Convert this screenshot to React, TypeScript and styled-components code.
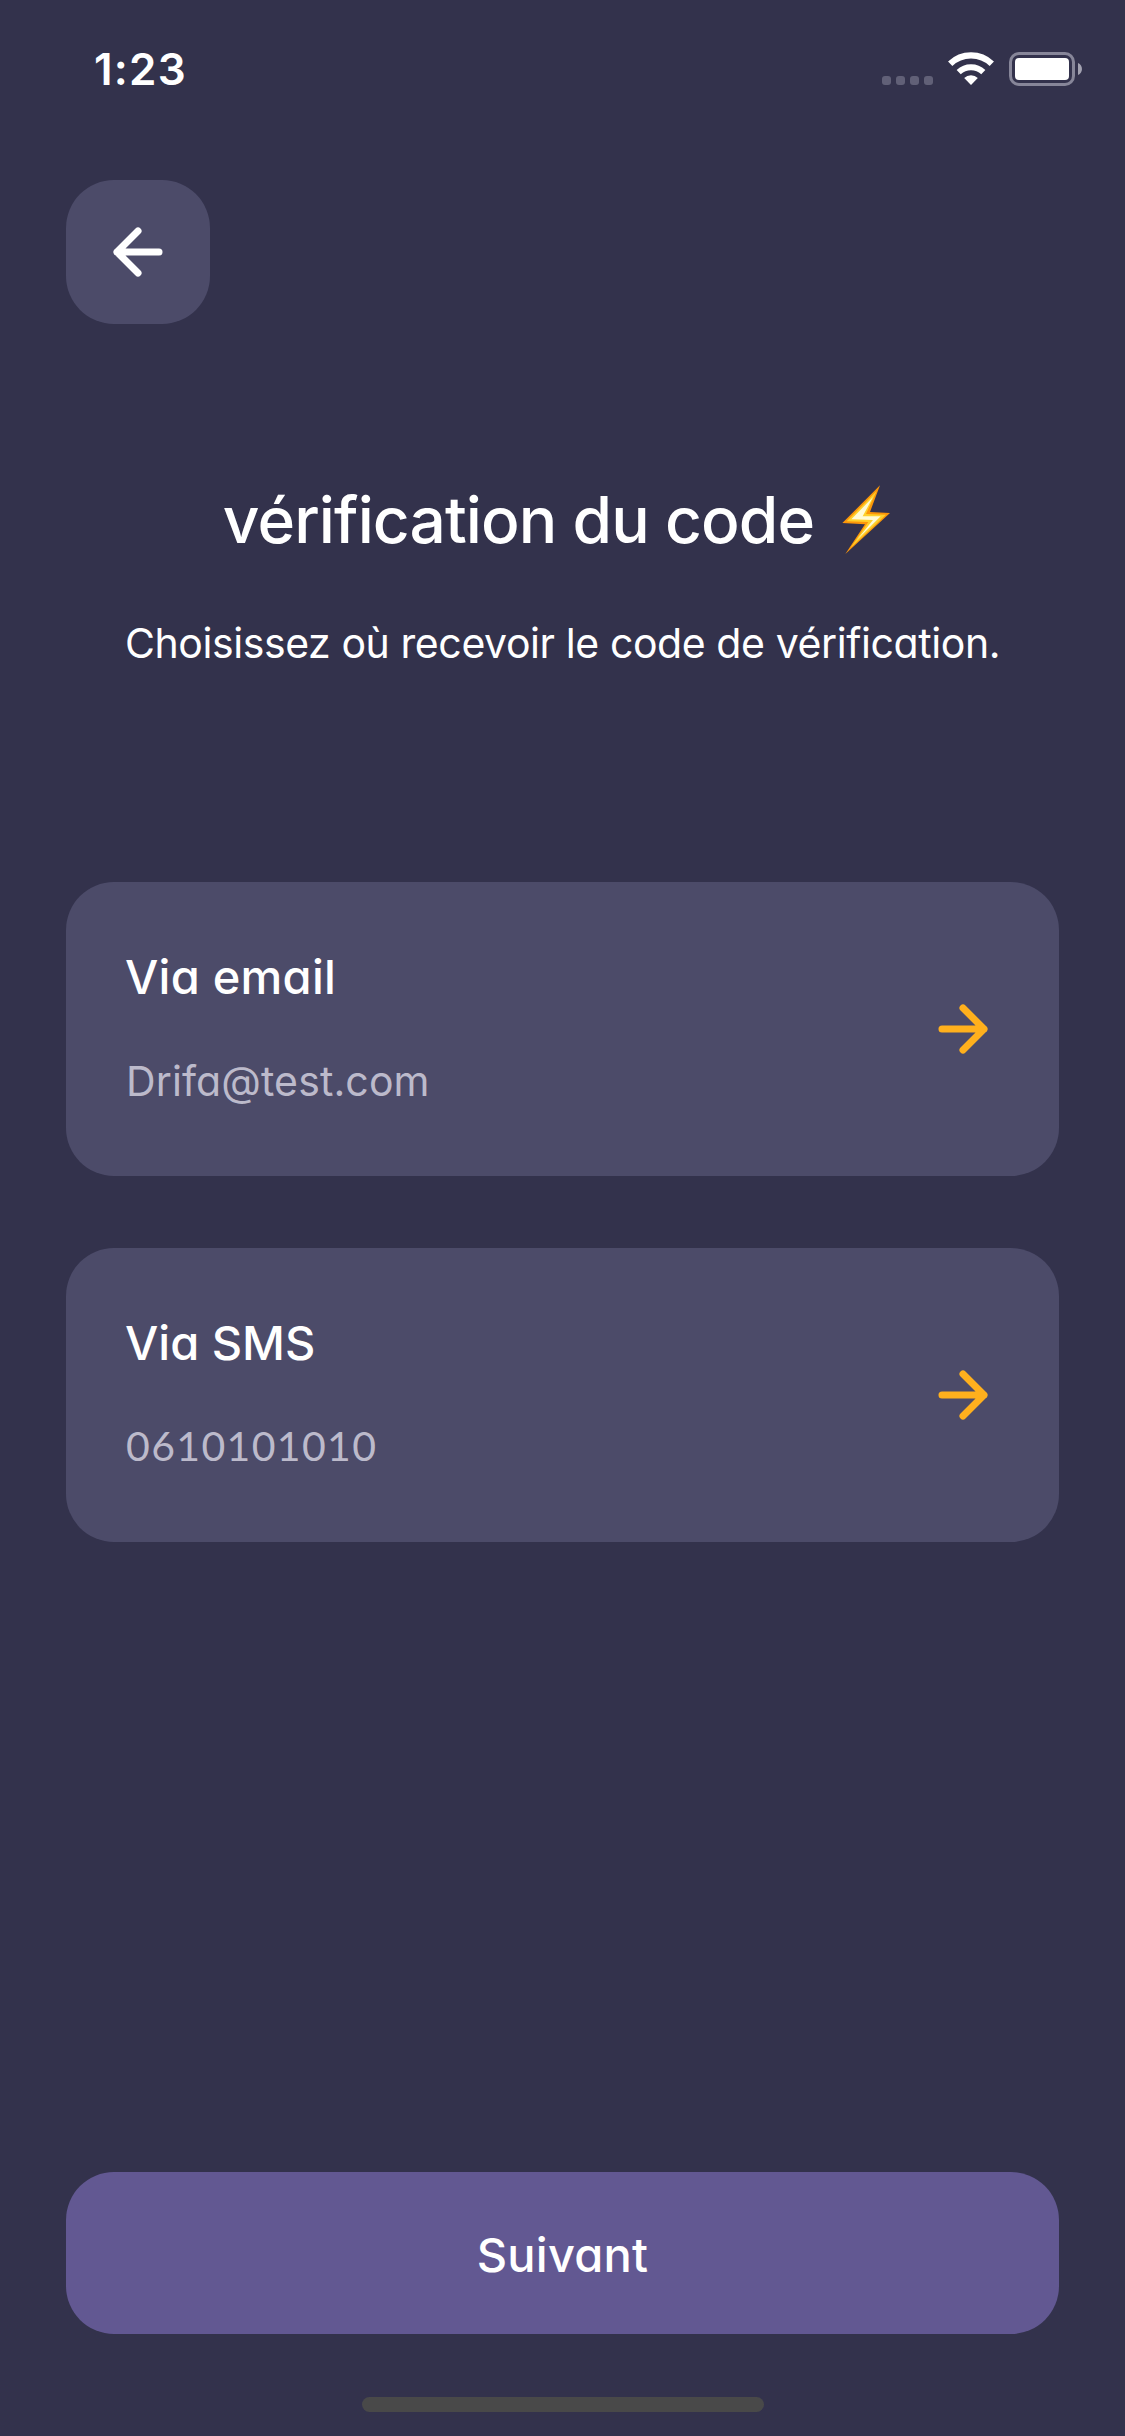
import React from "react";
import styled, { createGlobalStyle } from "styled-components";

const GlobalStyle = createGlobalStyle`
  *, *::before, *::after { box-sizing: border-box; }
  body { margin: 0; background: #33324c; }
  button { font: inherit; color: inherit; border: 0; padding: 0; cursor: pointer; }
`;

const Screen = styled.div`
  display: flex;
  flex-direction: column;
  width: 1125px;
  height: 2436px;
  overflow: hidden;
  background: #33324c;
  color: #fff;
  font-family: Inter, "Open Sans", sans-serif;
`;

const StatusBar = styled.header`
  display: flex;
  justify-content: space-between;
  height: 132px;
  padding: 42px 43px 0 94px;
`;

const Clock = styled.time`
  font-size: 44px;
  line-height: 54px;
  font-weight: 600;
  letter-spacing: 1.2px;
`;

const StatusIcons = styled.div`
  display: flex;
  align-items: flex-end;
  height: 44px;
  svg { display: block; }
`;

const SignalDots = styled.div`
  display: flex;
  gap: 5px;
  margin: 0 15px 1px 0;
`;

const Dot = styled.span`
  width: 9px;
  height: 9px;
  border-radius: 3px;
  background: #616077;
`;

const Content = styled.main`
  display: flex;
  flex-direction: column;
  flex: 1;
  padding: 48px 66px 0;
`;

const BackButton = styled.button`
  display: grid;
  place-items: center;
  width: 144px;
  height: 144px;
  border-radius: 48px;
  background: #4c4b69;
`;

const Heading = styled.div`
  display: flex;
  flex-direction: column;
  align-items: center;
  margin-top: 156px;
`;

const Title = styled.h1`
  display: flex;
  align-items: center;
  gap: 28px;
  height: 80px;
  margin: 0;
  padding-right: 11px;
  font-size: 64px;
  line-height: 80px;
  font-weight: 500;
  letter-spacing: -0.9px;
  white-space: nowrap;
  svg { display: block; margin-bottom: 1px; }
`;

const Subtitle = styled.p`
  margin: 53px 0 0;
  height: 60px;
  font-size: 41px;
  line-height: 60px;
  letter-spacing: -0.41px;
  font-feature-settings: "cv11";
  white-space: nowrap;
`;

const Options = styled.div`
  display: flex;
  flex-direction: column;
  gap: 72px;
  margin-top: 209px;
`;

const OptionCard = styled.button`
  display: flex;
  align-items: center;
  justify-content: space-between;
  height: 294px;
  padding: 0 60px;
  border-radius: 48px;
  background: #4c4b69;
  text-align: left;
  svg { display: block; }
`;

const OptionText = styled.span`
  display: flex;
  flex-direction: column;
  gap: 44px;
  font-feature-settings: "cv11";
`;

const OptionLabel = styled.span<{ $spacing: number }>`
  margin-left: -1px;
  font-size: 47px;
  line-height: 60px;
  font-weight: 500;
  letter-spacing: ${(p) => p.$spacing}px;
`;

const OptionValue = styled.span<{ $numeric: boolean }>`
  height: 60px;
  font-family: ${(p) => (p.$numeric ? 'Lato, Inter, sans-serif' : "inherit")};
  font-size: 41px;
  line-height: ${(p) => (p.$numeric ? 58 : 60)}px;
  color: #bcbacb;
  letter-spacing: ${(p) => (p.$numeric ? 1.35 : 0.12)}px;
`;

const NextButton = styled.button`
  height: 162px;
  margin-top: auto;
  border-radius: 48px;
  background: #625892;
  && {
    padding-top: 2px;
    font-size: 47px;
    font-weight: 500;
    letter-spacing: 0.25px;
  }
  font-feature-settings: "cv11";
`;

const HomeArea = styled.footer`
  display: flex;
  justify-content: center;
  height: 102px;
  padding-top: 63px;
`;

const HomeIndicator = styled.div`
  width: 402px;
  height: 15px;
  border-radius: 8px;
  background: #494949;
`;

const Arrow = ({ direction, color }: { direction: "left" | "right"; color: string }) => (
  <svg width="72" height="72" viewBox="0 0 24 24" fill="none" stroke={color} strokeWidth="2.35" strokeLinecap="round" strokeLinejoin="round">
    {direction === "left" ? <path d="M19 12H5M12 19l-7-7 7-7" /> : <path d="M5 12h14M12 5l7 7-7 7" />}
  </svg>
);

const WifiIcon = styled.svg`
  margin-right: 15px;
`;

const Wifi = () => (
  <WifiIcon width="46" height="34" viewBox="0 0 46 34" fill="none" stroke="#fff">
    <path d="M2.2 11.8A30 30 0 0 1 43.8 11.8" strokeWidth="6.2" />
    <path d="M10.7 20.1A18 18 0 0 1 35.3 20.1" strokeWidth="6" />
    <path d="M16.2 26.1A9.6 9.6 0 0 1 29.8 26.1L23 33Z" fill="#fff" stroke="none" />
  </WifiIcon>
);

const Battery = () => (
  <svg width="73" height="34" viewBox="0 0 73 34">
    <rect x="1.5" y="1.5" width="63" height="31" rx="8.5" fill="none" stroke="#878699" strokeWidth="3" />
    <rect x="6" y="6" width="54" height="22" rx="4" fill="#fff" />
    <path d="M69 11C74.3 13 74.3 21 69 23Z" fill="#a3a2b1" />
  </svg>
);

const Bolt = () => (
  <svg width="49" height="70" viewBox="728 74 147 210">
    <path d="M842 75L729 188L797 192L738 281L872 158L812 155Z" fill="#fb9609" />
    <path d="M832 92L742 183L807 185L754 262L860 163L800 161Z" fill="#ffd02a" />
    <path d="M821 110L756 177L821 179L772 240L844 168L790 168Z" fill="#fffbd5" />
  </svg>
);

const options = [
  { label: "Via email", value: "Drifa@test.com", labelSpacing: 0.25, numeric: false },
  { label: "Via SMS", value: "0610101010", labelSpacing: 0, numeric: true },
];

export default function App() {
  return (
    <Screen>
      <GlobalStyle />
      <StatusBar>
        <Clock>1:23</Clock>
        <StatusIcons>
          <SignalDots>
            <Dot />
            <Dot />
            <Dot />
            <Dot />
          </SignalDots>
          <Wifi />
          <Battery />
        </StatusIcons>
      </StatusBar>
      <Content>
        <BackButton aria-label="Retour">
          <Arrow direction="left" color="#fff" />
        </BackButton>
        <Heading>
          <Title>
            vérification du code
            <Bolt />
          </Title>
          <Subtitle>Choisissez où recevoir le code de vérification.</Subtitle>
        </Heading>
        <Options>
          {options.map((o) => (
            <OptionCard key={o.label}>
              <OptionText>
                <OptionLabel $spacing={o.labelSpacing}>{o.label}</OptionLabel>
                <OptionValue $numeric={o.numeric}>{o.value}</OptionValue>
              </OptionText>
              <Arrow direction="right" color="#ffb01d" />
            </OptionCard>
          ))}
        </Options>
        <NextButton>Suivant</NextButton>
      </Content>
      <HomeArea>
        <HomeIndicator />
      </HomeArea>
    </Screen>
  );
}
